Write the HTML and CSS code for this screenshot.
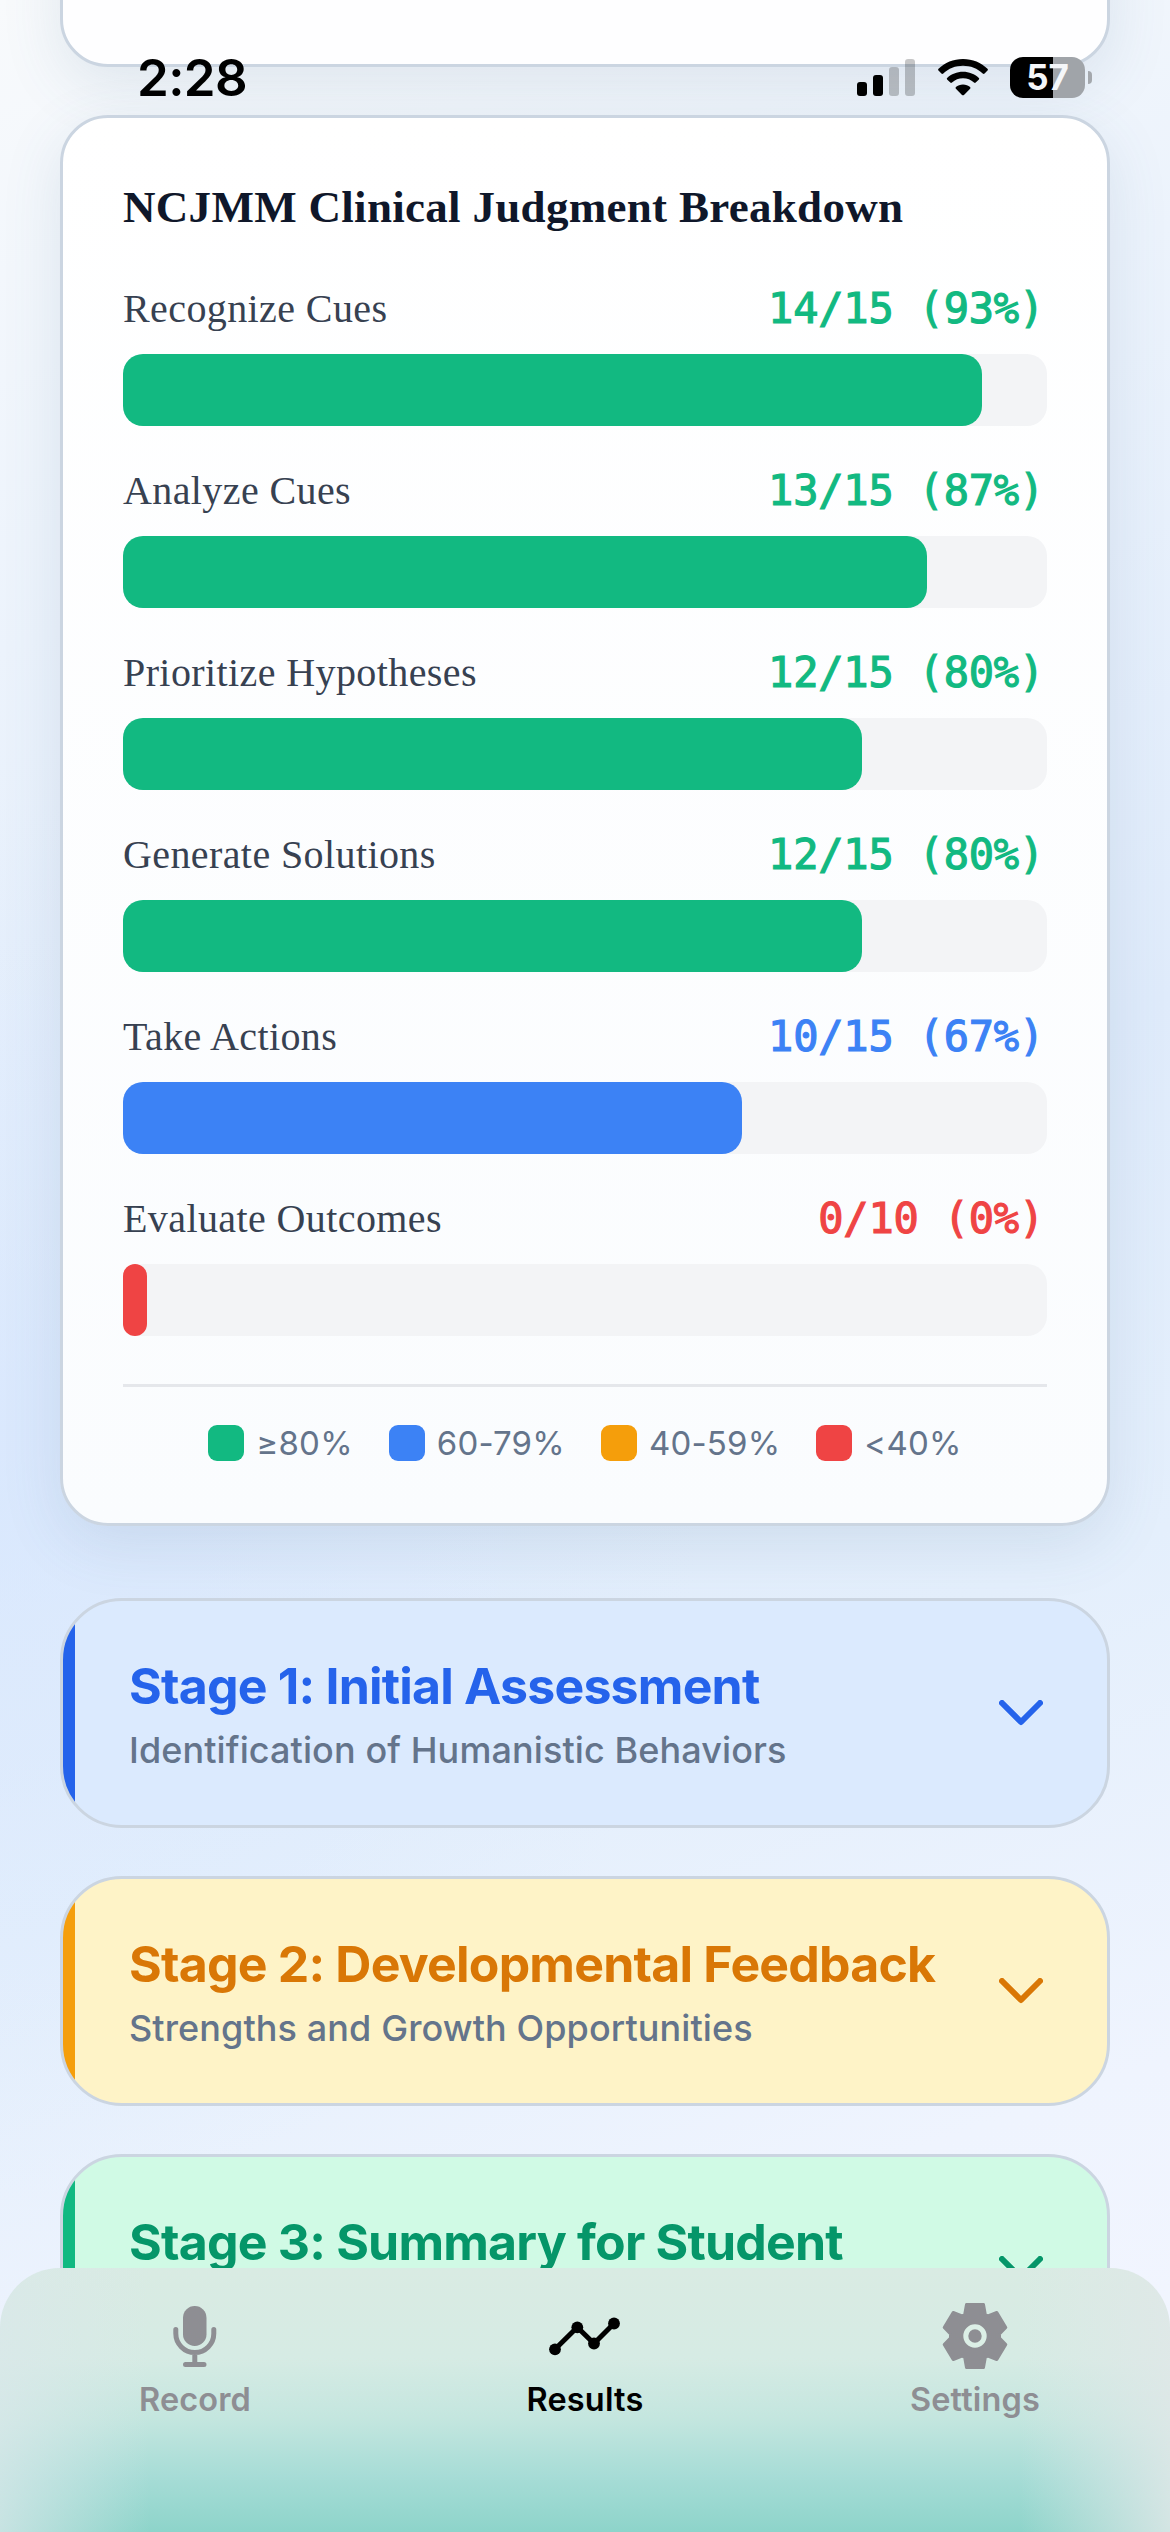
FILE: index.html
```html
<!DOCTYPE html>
<html lang="en">
<head>
    <meta charset="UTF-8">
    <meta name="viewport" content="width=device-width, initial-scale=1.0">
    <title>Results</title>
    <link rel="stylesheet" href="styles.css">
</head>
<body>
    <div class="screen">
        <!-- Status bar -->
        <header class="status-bar">
            <span class="time">2:28</span>
            <div class="status-icons">
                <svg class="signal" width="58" height="38" viewBox="0 0 58 38">
                    <rect x="0" y="23" width="10" height="14" rx="3"/>
                    <rect x="16" y="16" width="10" height="21" rx="3"/>
                    <rect class="dim" x="32" y="8" width="10" height="29" rx="3"/>
                    <rect class="dim" x="48" y="0" width="10" height="37" rx="3"/>
                </svg>
                <svg class="wifi" width="50" height="37" viewBox="0 0 50 37">
                    <path d="M25 0C15.500 0 6.600 3.700 0.500 9.800Q-0.300 10.700 0.500 11.600L3.400 14.500Q4.400 15.300 5.300 14.400C10.500 9.400 17.500 6.700 25 6.700S39.500 9.400 44.700 14.400Q45.600 15.300 46.600 14.500L49.500 11.600Q50.300 10.700 49.500 9.800C43.400 3.700 34.500 0 25 0Z"/>
                    <path d="M25 12.700C18.900 12.700 13.300 15 9.100 18.900Q8.400 19.700 9.100 20.500L12.300 23.600Q13.100 24.300 14 23.500C17 20.800 20.800 19.300 25 19.300S33 20.800 36 23.500Q36.900 24.300 37.700 23.600L40.900 20.500Q41.600 19.700 40.900 18.900C36.700 15 31.100 12.700 25 12.700Z"/>
                    <path d="M25 25.500C22.200 25.500 19.700 26.500 17.900 28.100Q17.100 29 17.900 29.800L24 35.900Q25 36.800 26 35.900L32.100 29.800Q32.900 29 32.100 28.100C30.300 26.500 27.800 25.500 25 25.500Z"/>
                </svg>
                <div class="battery">
                    <span class="battery-level">57</span>
                    <span class="battery-cap"></span>
                </div>
            </div>
        </header>

        <main class="content">
            <section class="card card-previous"></section>

            <section class="card breakdown">
                <h2 class="breakdown-title">NCJMM Clinical Judgment Breakdown</h2>

                <div class="metric good">
                    <div class="metric-head"><span class="metric-name">Recognize Cues</span><span class="metric-score">14/15 (93%)</span></div>
                    <div class="track"><div class="fill" style="width: 93%"></div></div>
                </div>
                <div class="metric good">
                    <div class="metric-head"><span class="metric-name">Analyze Cues</span><span class="metric-score">13/15 (87%)</span></div>
                    <div class="track"><div class="fill" style="width: 87%"></div></div>
                </div>
                <div class="metric good">
                    <div class="metric-head"><span class="metric-name">Prioritize Hypotheses</span><span class="metric-score">12/15 (80%)</span></div>
                    <div class="track"><div class="fill" style="width: 80%"></div></div>
                </div>
                <div class="metric good">
                    <div class="metric-head"><span class="metric-name">Generate Solutions</span><span class="metric-score">12/15 (80%)</span></div>
                    <div class="track"><div class="fill" style="width: 80%"></div></div>
                </div>
                <div class="metric fair">
                    <div class="metric-head"><span class="metric-name">Take Actions</span><span class="metric-score">10/15 (67%)</span></div>
                    <div class="track"><div class="fill" style="width: 67%"></div></div>
                </div>
                <div class="metric poor">
                    <div class="metric-head"><span class="metric-name">Evaluate Outcomes</span><span class="metric-score">0/10 (0%)</span></div>
                    <div class="track"><div class="fill" style="width: 0%"></div></div>
                </div>

                <div class="legend">
                    <span class="legend-item good"><i class="swatch"></i>≥80%</span>
                    <span class="legend-item fair"><i class="swatch"></i>60-79%</span>
                    <span class="legend-item weak"><i class="swatch"></i>40-59%</span>
                    <span class="legend-item poor"><i class="swatch"></i>&lt;40%</span>
                </div>
            </section>

            <section class="stage stage-blue">
                <div class="stage-text">
                    <h3 class="stage-title">Stage 1: Initial Assessment</h3>
                    <p class="stage-sub">Identification of Humanistic Behaviors</p>
                </div>
                <svg class="chevron" width="44" height="26" viewBox="0 0 44 26"><path d="M3 3l19 19 19-19"/></svg>
            </section>
            <section class="stage stage-amber">
                <div class="stage-text">
                    <h3 class="stage-title">Stage 2: Developmental Feedback</h3>
                    <p class="stage-sub">Strengths and Growth Opportunities</p>
                </div>
                <svg class="chevron" width="44" height="26" viewBox="0 0 44 26"><path d="M3 3l19 19 19-19"/></svg>
            </section>
            <section class="stage stage-green">
                <div class="stage-text">
                    <h3 class="stage-title">Stage 3: Summary for Student</h3>
                </div>
                <svg class="chevron" width="44" height="26" viewBox="0 0 44 26"><path d="M3 3l19 19 19-19"/></svg>
            </section>
        </main>

        <!-- Bottom tabs -->
        <nav class="tab-bar">
            <a class="tab">
                <svg class="tab-icon" width="72" height="72" viewBox="0 0 72 72">
                    <rect x="24" y="6" width="23.500" height="40" rx="11.700"/>
                    <path class="line" d="M16.800 29.500v4a19 19 0 0 0 38 0v-4M35.800 53v11M26.500 64.500h18.500"/>
                </svg>
                <span>Record</span>
            </a>
            <a class="tab active">
                <svg class="tab-icon" width="80" height="72" viewBox="0 0 80 72">
                    <path class="line" d="M10 49.300l22.300-22L49 43.500l20-20"/>
                    <circle cx="10" cy="49.300" r="5.900"/>
                    <circle cx="32.300" cy="27.300" r="5.900"/>
                    <circle cx="49" cy="43.500" r="5.900"/>
                    <circle cx="69" cy="23.500" r="5.900"/>
                </svg>
                <span>Results</span>
            </a>
            <a class="tab">
                <svg class="tab-icon" width="72" height="72" viewBox="0 0 72 72">
                    <path class="gear" d="M27.500 4.500H44.500L46.300 14.500L49 16L57.800 12.500L66.800 27.500L60.500 34V38L66.800 44.500L57.800 59.500L49 56L46.300 57.500L44.500 67.500H27.500L25.700 57.500L23 56L14.200 59.500L5.200 44.500L11.500 38V34L5.200 27.500L14.200 12.500L23 16L25.700 14.500Z"/>
                    <circle class="ring" cx="36" cy="36" r="9.200"/>
                </svg>
                <span>Settings</span>
            </a>
        </nav>
    </div>
</body>
</html>
```
FILE: styles.css
```css
:root {
    --green: #12b981;
    --blue: #3c82f5;
    --amber: #f59e0b;
    --red: #ef4444;
    --border: #cbd5e1;
    --muted: #64748b;
    --gray: #8e8e93;
}

* {
    box-sizing: border-box;
    margin: 0;
    padding: 0;
}

body {
    font-family: Inter, sans-serif;
    background: #e8f0fb;
}

.screen {
    position: relative;
    width: 1170px;
    height: 2532px;
    overflow: hidden;
    background:
        radial-gradient(circle at 0 1500px, rgba(214, 230, 255, 0.6), rgba(214, 230, 255, 0) 700px),
        linear-gradient(160deg, #f8fafc 0%, #ecf3fc 22%, #dfebfb 48%, #e4effc 66%, #eff4fe 84%, #f3f6ff 100%);
}

/* Status bar */
.status-bar {
    position: absolute;
    top: 0;
    left: 0;
    z-index: 2;
    width: 100%;
    height: 156px;
    display: flex;
    justify-content: space-between;
    padding: 56px 78px 0 137px;
}

.time {
    font-size: 51px;
    font-weight: 600;
    line-height: 44px;
    letter-spacing: -0.6px;
}

.status-icons {
    display: flex;
    align-items: flex-start;
}

.signal {
    margin: 3px 23px 0 0;
}

.dim {
    opacity: 0.22;
}

.wifi {
    margin: 3px 22px 0 0;
}

.battery {
    display: flex;
    align-items: center;
    margin-top: 1px;
}

.battery-level {
    width: 75px;
    height: 41px;
    border-radius: 13px;
    background: linear-gradient(90deg, #000 57%, #a0a4a9 57%);
    color: #f4f6f9;
    font-size: 35px;
    font-weight: 700;
    line-height: 41px;
    text-align: center;
}

.battery-cap {
    width: 4px;
    height: 13px;
    margin-left: 3px;
    border-radius: 0 6px 6px 0;
    background: #a4a8ad;
}

/* Cards */
.content {
    padding: 0 60px;
}

.card {
    border: 3px solid var(--border);
    border-radius: 48px;
    background: linear-gradient(#fff, #fafcfe);
    box-shadow: 0 18px 60px rgba(71, 105, 140, 0.13);
}

.card-previous {
    height: 167px;
    margin: -100px 0 48px;
    background: #fefeff;
}

.breakdown {
    height: 1411px;
    padding: 60px;
}

.breakdown-title {
    height: 110px;
    font-family: "Liberation Serif", serif;
    font-size: 45px;
    line-height: 58px;
    letter-spacing: 0.3px;
    color: #0f172a;
}

.metric {
    height: 182px;
}

.good {
    --tone: var(--green);
}

.fair {
    --tone: var(--blue);
}

.weak {
    --tone: var(--amber);
}

.poor {
    --tone: var(--red);
}

.metric-head {
    display: flex;
    justify-content: space-between;
    height: 66px;
    line-height: 42px;
}

.metric-name {
    font-family: "Liberation Serif", serif;
    font-size: 40px;
    letter-spacing: 0.4px;
    color: #374151;
}

.metric-score {
    padding-right: 3px;
    font-family: "DejaVu Sans Mono", monospace;
    font-size: 42px;
    letter-spacing: -0.2px;
    color: var(--tone);
    -webkit-text-stroke: 1.2px var(--tone);
}

.track {
    height: 72px;
    border-radius: 20px;
    background: #f3f4f6;
}

.fill {
    min-width: 24px;
    height: 72px;
    border-radius: 20px;
    background: var(--tone);
}

.legend {
    display: flex;
    justify-content: center;
    gap: 36px;
    margin-top: 4px;
    padding-top: 38px;
    border-top: 3px solid #e5e7eb;
    font-size: 33px;
    line-height: 36px;
    letter-spacing: 0.2px;
    color: var(--muted);
}

.legend-item {
    display: flex;
    gap: 12px;
}

.swatch {
    width: 36px;
    height: 36px;
    border-radius: 9px;
    background: var(--tone);
}

/* Stages */
.stage {
    display: flex;
    justify-content: space-between;
    align-items: flex-start;
    height: 230px;
    margin-top: 48px;
    padding: 58px 64px 0 54px;
    border: 3px solid var(--border);
    border-radius: 62px;
    overflow: hidden;
    background: linear-gradient(90deg, var(--edge) 12px, var(--fill) 12px);
    color: var(--tone);
}

.breakdown + .stage {
    margin-top: 72px;
}

.stage-blue {
    --edge: #2563eb;
    --fill: #dbeafe;
    --tone: #2563eb;
}

.stage-amber {
    --edge: #f59e0b;
    --fill: #fef3c7;
    --tone: #d97706;
}

.stage-green {
    --edge: #10b981;
    --fill: #d0fae5;
    --tone: #059669;
}

.stage-text {
    padding-left: 12px;
}

.stage-title {
    font-size: 50px;
    font-weight: 700;
    line-height: 54px;
    letter-spacing: -0.8px;
}

.stage-sub {
    margin-top: 15px;
    font-size: 36px;
    font-weight: 450;
    line-height: 44px;
    letter-spacing: 0.1px;
    color: var(--muted);
}

.chevron {
    margin-top: 41px;
    fill: none;
    stroke: currentColor;
    stroke-width: 6px;
    stroke-linecap: round;
    stroke-linejoin: round;
}

/* Bottom tabs */
.tab-bar {
    position: absolute;
    left: 0;
    bottom: 0;
    width: 100%;
    height: 264px;
    display: flex;
    border-radius: 60px 60px 0 0;
    overflow: hidden;
    background:
        linear-gradient(90deg, rgba(218, 232, 234, 0.75), rgba(218, 232, 234, 0) 150px, rgba(224, 232, 232, 0) 1020px, rgba(224, 232, 232, 0.85)),
        linear-gradient(#d9ebe3 0, #d6ebe4 90px, #c4e6df 150px, #a6dcd6 210px, #8dd4ca 264px);
}

.tab {
    flex: 1;
    display: flex;
    flex-direction: column;
    align-items: center;
    padding-top: 32px;
    font-size: 32.500px;
    font-weight: 600;
    line-height: 40px;
    letter-spacing: 0.15px;
    color: var(--gray);
}

.tab span {
    margin-top: 8px;
}

.tab.active {
    color: #000;
}

.tab-icon {
    fill: currentColor;
}

.line {
    fill: none;
    stroke: currentColor;
    stroke-width: 5px;
    stroke-linecap: round;
}

.gear {
    stroke: currentColor;
    stroke-width: 3px;
    stroke-linejoin: round;
}

.ring {
    stroke: #dcefe6;
    stroke-width: 5px;
}
```
